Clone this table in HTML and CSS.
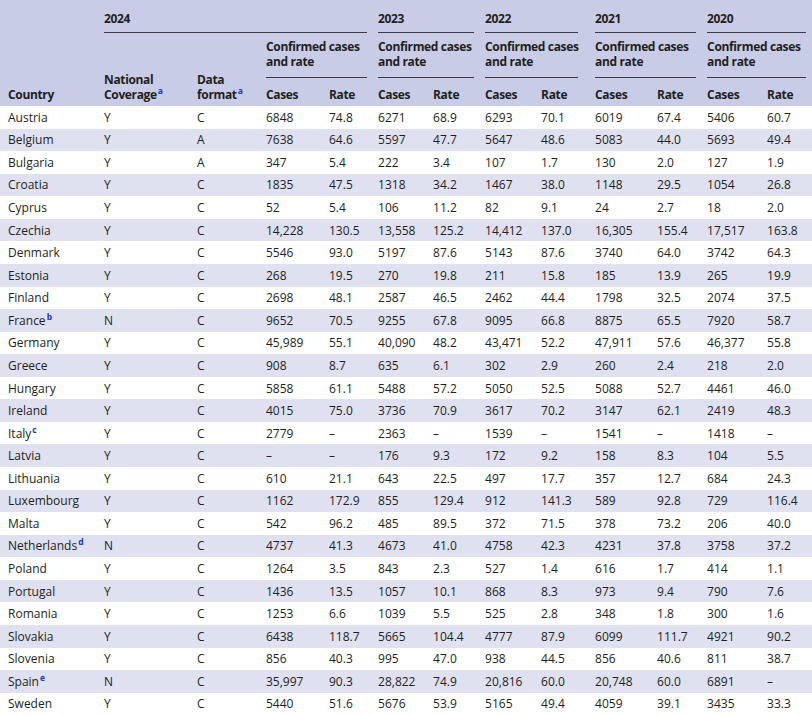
FILE: index.html
```html
<!DOCTYPE html>
<html lang="en">
<head>
<meta charset="utf-8">
<title>Confirmed cases and rate</title>
<link rel="stylesheet" href="styles.css">
</head>
<body>
<table class="tbl">
<colgroup>
<col class="c-country"><col class="c-nat"><col class="c-fmt">
<col class="c-cases24"><col class="c-rate24">
<col class="c-cases23"><col class="c-rate23">
<col class="c-cases22"><col class="c-rate22">
<col class="c-cases21"><col class="c-rate21">
<col class="c-cases20"><col class="c-rate20">
</colgroup>
<thead>
<tr class="h1">
<th rowspan="3" class="first stub">Country</th>
<th colspan="4" class="grp"><div class="rule">2024</div></th>
<th colspan="2" class="grp"><div class="rule">2023</div></th>
<th colspan="2" class="grp wide"><div class="rule">2022</div></th>
<th colspan="2" class="grp"><div class="rule">2021</div></th>
<th colspan="2" class="grp"><div class="rule">2020</div></th>
</tr>
<tr class="h2">
<th rowspan="2" class="stub">National<br>Coverage<sup>a</sup></th>
<th rowspan="2" class="stub">Data<br>format<sup>a</sup></th>
<th colspan="2" class="grp"><div class="rule">Confirmed cases<br>and rate</div></th>
<th colspan="2" class="grp"><div class="rule">Confirmed cases<br>and rate</div></th>
<th colspan="2" class="grp wide"><div class="rule">Confirmed cases<br>and rate</div></th>
<th colspan="2" class="grp"><div class="rule">Confirmed cases<br>and rate</div></th>
<th colspan="2" class="grp"><div class="rule">Confirmed cases<br>and rate</div></th>
</tr>
<tr class="h3">
<th>Cases</th><th>Rate</th>
<th>Cases</th><th>Rate</th>
<th>Cases</th><th>Rate</th>
<th>Cases</th><th>Rate</th>
<th>Cases</th><th>Rate</th>
</tr>
</thead>
<tbody>
<tr><td class="first">Austria</td><td>Y</td><td>C</td><td>6848</td><td>74.8</td><td>6271</td><td>68.9</td><td>6293</td><td>70.1</td><td>6019</td><td>67.4</td><td>5406</td><td>60.7</td></tr>
<tr><td class="first">Belgium</td><td>Y</td><td>A</td><td>7638</td><td>64.6</td><td>5597</td><td>47.7</td><td>5647</td><td>48.6</td><td>5083</td><td>44.0</td><td>5693</td><td>49.4</td></tr>
<tr><td class="first">Bulgaria</td><td>Y</td><td>A</td><td>347</td><td>5.4</td><td>222</td><td>3.4</td><td>107</td><td>1.7</td><td>130</td><td>2.0</td><td>127</td><td>1.9</td></tr>
<tr><td class="first">Croatia</td><td>Y</td><td>C</td><td>1835</td><td>47.5</td><td>1318</td><td>34.2</td><td>1467</td><td>38.0</td><td>1148</td><td>29.5</td><td>1054</td><td>26.8</td></tr>
<tr><td class="first">Cyprus</td><td>Y</td><td>C</td><td>52</td><td>5.4</td><td>106</td><td>11.2</td><td>82</td><td>9.1</td><td>24</td><td>2.7</td><td>18</td><td>2.0</td></tr>
<tr><td class="first">Czechia</td><td>Y</td><td>C</td><td>14,228</td><td>130.5</td><td>13,558</td><td>125.2</td><td>14,412</td><td>137.0</td><td>16,305</td><td>155.4</td><td>17,517</td><td>163.8</td></tr>
<tr><td class="first">Denmark</td><td>Y</td><td>C</td><td>5546</td><td>93.0</td><td>5197</td><td>87.6</td><td>5143</td><td>87.6</td><td>3740</td><td>64.0</td><td>3742</td><td>64.3</td></tr>
<tr><td class="first">Estonia</td><td>Y</td><td>C</td><td>268</td><td>19.5</td><td>270</td><td>19.8</td><td>211</td><td>15.8</td><td>185</td><td>13.9</td><td>265</td><td>19.9</td></tr>
<tr><td class="first">Finland</td><td>Y</td><td>C</td><td>2698</td><td>48.1</td><td>2587</td><td>46.5</td><td>2462</td><td>44.4</td><td>1798</td><td>32.5</td><td>2074</td><td>37.5</td></tr>
<tr><td class="first">France<sup>b</sup></td><td>N</td><td>C</td><td>9652</td><td>70.5</td><td>9255</td><td>67.8</td><td>9095</td><td>66.8</td><td>8875</td><td>65.5</td><td>7920</td><td>58.7</td></tr>
<tr><td class="first">Germany</td><td>Y</td><td>C</td><td>45,989</td><td>55.1</td><td>40,090</td><td>48.2</td><td>43,471</td><td>52.2</td><td>47,911</td><td>57.6</td><td>46,377</td><td>55.8</td></tr>
<tr><td class="first">Greece</td><td>Y</td><td>C</td><td>908</td><td>8.7</td><td>635</td><td>6.1</td><td>302</td><td>2.9</td><td>260</td><td>2.4</td><td>218</td><td>2.0</td></tr>
<tr><td class="first">Hungary</td><td>Y</td><td>C</td><td>5858</td><td>61.1</td><td>5488</td><td>57.2</td><td>5050</td><td>52.5</td><td>5088</td><td>52.7</td><td>4461</td><td>46.0</td></tr>
<tr><td class="first">Ireland</td><td>Y</td><td>C</td><td>4015</td><td>75.0</td><td>3736</td><td>70.9</td><td>3617</td><td>70.2</td><td>3147</td><td>62.1</td><td>2419</td><td>48.3</td></tr>
<tr><td class="first">Italy<sup>c</sup></td><td>Y</td><td>C</td><td>2779</td><td>–</td><td>2363</td><td>–</td><td>1539</td><td>–</td><td>1541</td><td>–</td><td>1418</td><td>–</td></tr>
<tr><td class="first">Latvia</td><td>Y</td><td>C</td><td>–</td><td>–</td><td>176</td><td>9.3</td><td>172</td><td>9.2</td><td>158</td><td>8.3</td><td>104</td><td>5.5</td></tr>
<tr><td class="first">Lithuania</td><td>Y</td><td>C</td><td>610</td><td>21.1</td><td>643</td><td>22.5</td><td>497</td><td>17.7</td><td>357</td><td>12.7</td><td>684</td><td>24.3</td></tr>
<tr><td class="first">Luxembourg</td><td>Y</td><td>C</td><td>1162</td><td>172.9</td><td>855</td><td>129.4</td><td>912</td><td>141.3</td><td>589</td><td>92.8</td><td>729</td><td>116.4</td></tr>
<tr><td class="first">Malta</td><td>Y</td><td>C</td><td>542</td><td>96.2</td><td>485</td><td>89.5</td><td>372</td><td>71.5</td><td>378</td><td>73.2</td><td>206</td><td>40.0</td></tr>
<tr><td class="first">Netherlands<sup>d</sup></td><td>N</td><td>C</td><td>4737</td><td>41.3</td><td>4673</td><td>41.0</td><td>4758</td><td>42.3</td><td>4231</td><td>37.8</td><td>3758</td><td>37.2</td></tr>
<tr><td class="first">Poland</td><td>Y</td><td>C</td><td>1264</td><td>3.5</td><td>843</td><td>2.3</td><td>527</td><td>1.4</td><td>616</td><td>1.7</td><td>414</td><td>1.1</td></tr>
<tr><td class="first">Portugal</td><td>Y</td><td>C</td><td>1436</td><td>13.5</td><td>1057</td><td>10.1</td><td>868</td><td>8.3</td><td>973</td><td>9.4</td><td>790</td><td>7.6</td></tr>
<tr><td class="first">Romania</td><td>Y</td><td>C</td><td>1253</td><td>6.6</td><td>1039</td><td>5.5</td><td>525</td><td>2.8</td><td>348</td><td>1.8</td><td>300</td><td>1.6</td></tr>
<tr><td class="first">Slovakia</td><td>Y</td><td>C</td><td>6438</td><td>118.7</td><td>5665</td><td>104.4</td><td>4777</td><td>87.9</td><td>6099</td><td>111.7</td><td>4921</td><td>90.2</td></tr>
<tr><td class="first">Slovenia</td><td>Y</td><td>C</td><td>856</td><td>40.3</td><td>995</td><td>47.0</td><td>938</td><td>44.5</td><td>856</td><td>40.6</td><td>811</td><td>38.7</td></tr>
<tr><td class="first">Spain<sup>e</sup></td><td>N</td><td>C</td><td>35,997</td><td>90.3</td><td>28,822</td><td>74.9</td><td>20,816</td><td>60.0</td><td>20,748</td><td>60.0</td><td>6891</td><td>–</td></tr>
<tr><td class="first">Sweden</td><td>Y</td><td>C</td><td>5440</td><td>51.6</td><td>5676</td><td>53.9</td><td>5165</td><td>49.4</td><td>4059</td><td>39.1</td><td>3435</td><td>33.3</td></tr>
</tbody>
</table>
</body>
</html>
```

FILE: styles.css
```css
html, body {
  margin: 0;
  padding: 0;
  background: #ffffff;
}

body {
  font-family: "Open Sans", "Liberation Sans", Arial, sans-serif;
  font-size: 12px;
  color: #231f20;
}

.tbl {
  width: 812px;
  table-layout: fixed;
  border-collapse: collapse;
  border-spacing: 0;
}

.c-country { width: 99px; }
.c-nat { width: 93px; }
.c-fmt { width: 69px; }
.c-cases24 { width: 63px; }
.c-rate24 { width: 49px; }
.c-cases23 { width: 55px; }
.c-rate23 { width: 52px; }
.c-cases22 { width: 56px; }
.c-rate22 { width: 54px; }
.c-cases21 { width: 62px; }
.c-rate21 { width: 50px; }
.c-cases20 { width: 60px; }
.c-rate20 { width: 50px; }

.tbl th,
.tbl td {
  text-align: left;
  padding: 0 6px 0 5px;
  line-height: 15px;
  white-space: nowrap;
}

.tbl .first {
  padding-left: 8px;
}

thead th {
  background: #c9cce6;
  font-weight: bold;
  vertical-align: bottom;
  letter-spacing: -0.35px;
}

.h1 th.grp {
  height: 33px;
  padding-top: 0;
  padding-bottom: 0;
}

.h1 .rule {
  padding-top: 10px;
  padding-bottom: 6px;
}

.h2 th.grp {
  height: 45px;
}

.h2 .rule {
  padding-bottom: 8px;
}

.rule {
  border-bottom: 1px solid #3c3c46;
}

th.wide {
  padding-right: 12px;
}

.h3 th {
  height: 28px;
  padding-top: 0;
  padding-bottom: 4px;
  box-sizing: border-box;
}

th.stub {
  padding-bottom: 4px;
}

tbody td {
  height: 22.57px;
  padding-top: 0;
  padding-bottom: 0;
  vertical-align: middle;
  box-sizing: border-box;
}

tbody tr:nth-child(even) td {
  background: #dfe1f1;
}

sup {
  color: #2233bb;
  font-weight: bold;
  font-size: 8.5px;
  line-height: 0;
  vertical-align: 5px;
  margin-left: 1px;
  letter-spacing: 0;
}
```
